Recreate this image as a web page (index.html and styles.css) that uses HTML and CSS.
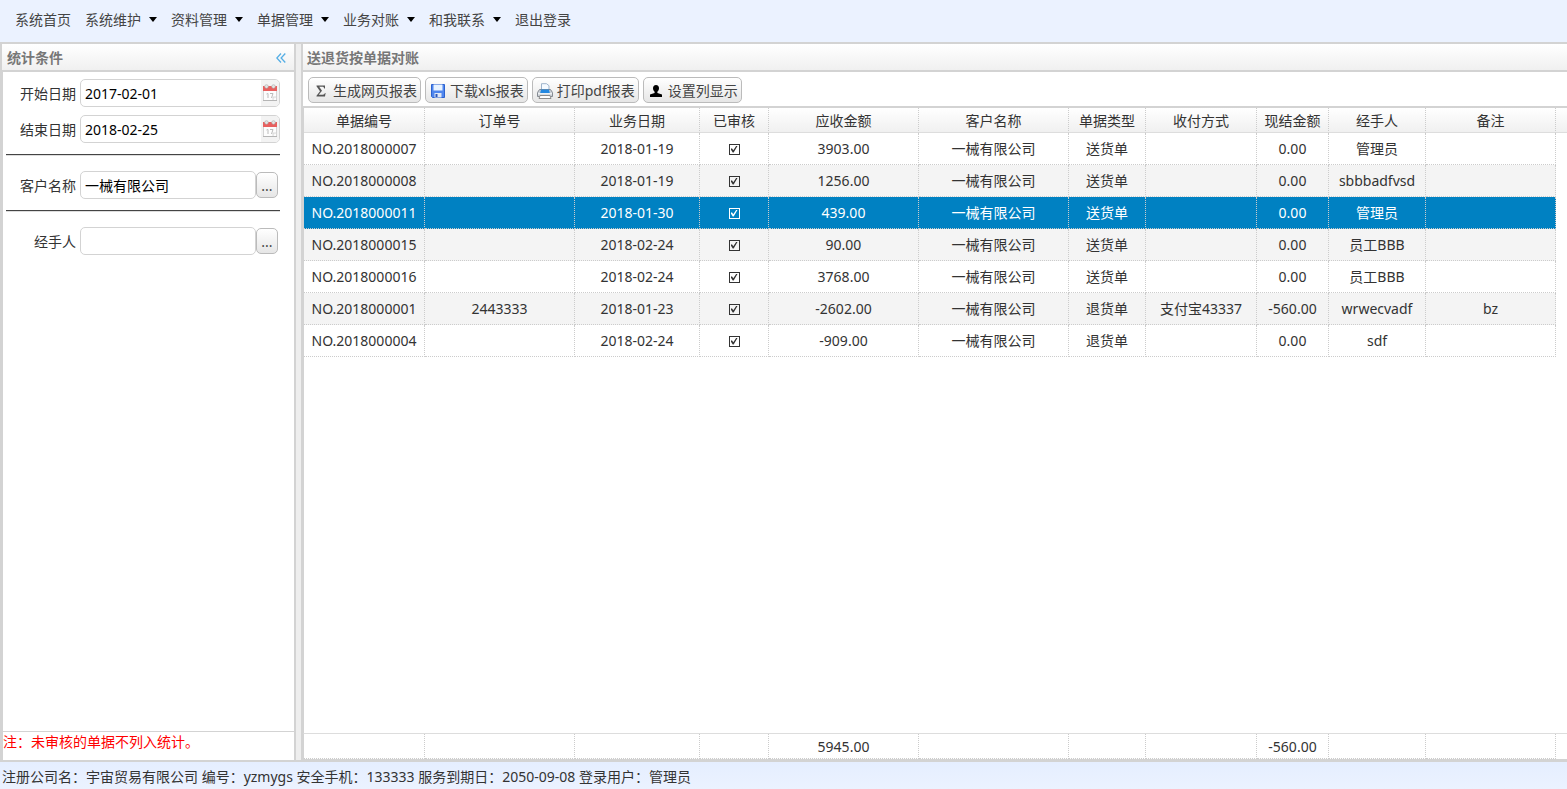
FILE: index.html
```html
<!DOCTYPE html>
<html lang="zh-CN">
<head>
<meta charset="utf-8">
<title>送退货按单据对账</title>
<link rel="stylesheet" href="styles.css">
</head>
<body>
<svg class="defs" aria-hidden="true">
  <symbol id="calendar" viewBox="0 0 16 18">
    <rect x="1.500" y="3.500" width="13" height="13" fill="#fdfdfd" stroke="#d4d4d4"/>
    <path d="M1 16.500h14" stroke="#b5b5b5"/>
    <path d="M1 2h14v5H1z" fill="#e8605f"/>
    <circle cx="4.500" cy="2.500" r="1.800" fill="#e6e6e6" stroke="#aaa" stroke-width=".6"/>
    <circle cx="11.500" cy="2.500" r="1.800" fill="#e6e6e6" stroke="#aaa" stroke-width=".6"/>
    <path d="M4.500 10l1-.5h.5V14M8 9.500h3L9.500 14" fill="none" stroke="#bbb"/>
    <path d="M11 16v-3h3.500" fill="#f5f5f5" stroke="#ccc" stroke-width=".7"/>
  </symbol>
</svg>
<nav class="menu">
  <a href="#">系统首页</a>
  <a href="#" class="drop">系统维护</a>
  <a href="#" class="drop">资料管理</a>
  <a href="#" class="drop">单据管理</a>
  <a href="#" class="drop">业务对账</a>
  <a href="#" class="drop">和我联系</a>
  <a href="#">退出登录</a>
</nav>
<div class="workspace">
  <aside class="side">
    <header class="bar">
      <h2>统计条件</h2>
      <button class="collapse" aria-label="收起"><svg width="10" height="10" viewBox="0 0 10 10"><path d="M5 .5L.8 5 5 9.500M9.300.5L5.100 5l4.200 4.500" fill="none" stroke="#55aee5" stroke-width="1.300"/></svg></button>
    </header>
    <form class="filters">
      <div class="field"><label for="start">开始日期</label><div class="box date"><input id="start" value="2017-02-01"><button type="button" aria-label="选择开始日期"><svg width="16" height="18"><use href="#calendar"/></svg></button></div></div>
      <div class="field"><label for="end">结束日期</label><div class="box date"><input id="end" value="2018-02-25"><button type="button" aria-label="选择结束日期"><svg width="16" height="18"><use href="#calendar"/></svg></button></div></div>
      <hr>
      <div class="field"><label for="client">客户名称</label><div class="box"><input id="client" value="一械有限公司"></div><button type="button" class="btn pick">...</button></div>
      <hr>
      <div class="field"><label for="handler">经手人</label><div class="box"><input id="handler" value=""></div><button type="button" class="btn pick">...</button></div>
    </form>
    <p class="note">注：未审核的单据不列入统计。</p>
  </aside>
  <div class="splitter"></div>
  <main class="main">
    <header class="bar"><h2>送退货按单据对账</h2></header>
    <div class="tools">
      <button class="btn"><svg width="16" height="16" viewBox="0 0 16 16"><path d="M3.500 2.500h8.500v3h-.8c-.2-1.300-.7-1.800-2-1.800H6.200L9 7.700 5.700 11.800h4c1.300 0 1.900-.6 2.200-1.700h.7l-.6 3.400H3.500v-.8L7 8.300 3.500 3.300z" fill="#555"/></svg>生成网页报表</button>
      <button class="btn"><svg width="16" height="16" viewBox="0 0 16 16"><path d="M1.500 1.500h13v13H2.500l-1-1z" fill="#4f86ee" stroke="#2c62cf"/><path d="M3.500 1.500h9v6h-9z" fill="#e8f3ff"/><path d="M4.500 10h7v4.500h-7z" fill="#dfe7f5"/><path d="M5.500 11h2v3h-2z" fill="#2a55b8"/></svg>下载xls报表</button>
      <button class="btn"><svg width="16" height="16" viewBox="0 0 16 16"><path d="M4.500 7V.7h5l2.500 2V7" fill="#f5faff" stroke="#9fb4cc"/><path d="M2.500 6.500h11l2 3v4h-15v-4z" fill="#c9cfd6" stroke="#858b92"/><path d="M4 6.500h8l.8 3.500H3.200z" fill="#2488e0"/><path d="M1 10.800h14" stroke="#fff"/><path d="M3 12.500h10l1 3H2z" fill="#fff" stroke="#8c8c8c"/></svg>打印pdf报表</button>
      <button class="btn"><svg width="16" height="16" viewBox="0 0 16 16"><path d="M8 2c2 0 3 1.300 3 3.200 0 1.500-.7 2.800-1.600 3.500v1.200l4.600 1.600V14H2v-2.500l4.600-1.600V8.700C5.700 8 5 6.700 5 5.200 5 3.300 6 2 8 2z" fill="#000"/></svg>设置列显示</button>
    </div>
    <div class="grid">
      <table>
        <colgroup><col class="c1"><col class="c2"><col class="c3"><col class="c4"><col class="c5"><col class="c6"><col class="c7"><col class="c8"><col class="c9"><col class="c10"><col class="c11"><col></colgroup>
        <thead><tr><th>单据编号</th><th>订单号</th><th>业务日期</th><th>已审核</th><th>应收金额</th><th>客户名称</th><th>单据类型</th><th>收付方式</th><th>现结金额</th><th>经手人</th><th>备注</th><th class="rest"></th></tr></thead>
        <tbody>
          <tr><td>NO.2018000007</td><td></td><td>2018-01-19</td><td><input type="checkbox" aria-label="已审核" checked></td><td>3903.00</td><td>一械有限公司</td><td>送货单</td><td></td><td>0.00</td><td>管理员</td><td></td><td class="rest"></td></tr>
          <tr><td>NO.2018000008</td><td></td><td>2018-01-19</td><td><input type="checkbox" aria-label="已审核" checked></td><td>1256.00</td><td>一械有限公司</td><td>送货单</td><td></td><td>0.00</td><td>sbbbadfvsd</td><td></td><td class="rest"></td></tr>
          <tr class="selected"><td>NO.2018000011</td><td></td><td>2018-01-30</td><td><input type="checkbox" aria-label="已审核" checked></td><td>439.00</td><td>一械有限公司</td><td>送货单</td><td></td><td>0.00</td><td>管理员</td><td></td><td class="rest"></td></tr>
          <tr><td>NO.2018000015</td><td></td><td>2018-02-24</td><td><input type="checkbox" aria-label="已审核" checked></td><td>90.00</td><td>一械有限公司</td><td>送货单</td><td></td><td>0.00</td><td>员工BBB</td><td></td><td class="rest"></td></tr>
          <tr><td>NO.2018000016</td><td></td><td>2018-02-24</td><td><input type="checkbox" aria-label="已审核" checked></td><td>3768.00</td><td>一械有限公司</td><td>送货单</td><td></td><td>0.00</td><td>员工BBB</td><td></td><td class="rest"></td></tr>
          <tr><td>NO.2018000001</td><td>2443333</td><td>2018-01-23</td><td><input type="checkbox" aria-label="已审核" checked></td><td>-2602.00</td><td>一械有限公司</td><td>退货单</td><td>支付宝43337</td><td>-560.00</td><td>wrwecvadf</td><td>bz</td><td class="rest"></td></tr>
          <tr><td>NO.2018000004</td><td></td><td>2018-02-24</td><td><input type="checkbox" aria-label="已审核" checked></td><td>-909.00</td><td>一械有限公司</td><td>退货单</td><td></td><td>0.00</td><td>sdf</td><td></td><td class="rest"></td></tr>
        </tbody>
      </table>
    </div>
    <div class="totals">
      <table>
        <colgroup><col class="c1"><col class="c2"><col class="c3"><col class="c4"><col class="c5"><col class="c6"><col class="c7"><col class="c8"><col class="c9"><col class="c10"><col class="c11"><col></colgroup>
        <tbody><tr><td></td><td></td><td></td><td></td><td>5945.00</td><td></td><td></td><td></td><td>-560.00</td><td></td><td></td><td class="rest"></td></tr></tbody>
      </table>
    </div>
  </main>
</div>
<footer class="status">注册公司名：宇宙贸易有限公司 编号：yzmygs 安全手机：133333 服务到期日：2050-09-08 登录用户：管理员</footer>
</body>
</html>
```
FILE: styles.css
```css
* { box-sizing: border-box; }
body {
  margin: 0;
  height: 100vh;
  display: flex;
  flex-direction: column;
  overflow: hidden;
  background: #ebf2ff;
  color: #333;
  font: 14px/20px "Noto Sans", "Noto Sans CJK SC", sans-serif;
}
button, input { font: inherit; color: inherit; margin: 0; }
.defs { position: absolute; width: 0; height: 0; }

.menu { display: flex; gap: 14px; padding: 10px 15px 12px; }
.menu a { color: #444; text-decoration: none; white-space: nowrap; }
.menu .drop::after {
  content: "";
  display: inline-block;
  margin-left: 8px;
  vertical-align: 3px;
  border: 4px solid transparent;
  border-top: 5px solid #000;
  border-bottom: 0;
}

.workspace { flex: 1; min-height: 0; display: flex; border: solid #d3d3d3; border-width: 2px 0 2px 2px; }
.bar {
  display: flex;
  align-items: center;
  justify-content: space-between;
  height: 28px;
  padding: 1px 8px 0 5px;
  background: linear-gradient(#fff, #f0f0f0);
  border-bottom: 2px solid #d3d3d3;
}
.bar h2 { margin: 0; color: #777; font-size: 14px; line-height: 20px; }
.collapse { display: flex; padding: 0; border: 0; background: none; }

.side { width: 294px; display: flex; flex-direction: column; background: #fff; border-right: 2px solid #d3d3d3; }
.filters { flex: 1; display: flex; flex-direction: column; gap: 8px; padding: 7px 14px 0 3px; border-left: 1px solid #d3d3d3; }
.field { display: flex; align-items: center; height: 28px; }
.field label { width: 70px; margin-right: 4px; padding-top: 2px; text-align: right; }
.box { display: flex; flex: 1; height: 28px; overflow: hidden; border: 1px solid #d3d3d3; border-radius: 5px; background: #fff; }
.box input { flex: 1; min-width: 0; padding: 2px 4px 0; border: 0; outline: 0; background: none; color: #000; }
.date button { display: flex; align-items: center; width: 18px; padding: 0 1px; border: 0; background: #f3f3f3; }
.filters hr { width: 100%; height: 2px; margin: 3px 0 7px; border: 0; border-top: 1px solid #444; border-bottom: 1px solid #ddd; }
.btn {
  display: flex;
  align-items: center;
  gap: 4px;
  height: 26px;
  padding: 1px 3px 0 4px;
  border: 1px solid #bbb;
  border-radius: 5px;
  background: linear-gradient(#fff, #e6e6e6);
  color: #444;
  white-space: nowrap;
}
.btn svg { flex: none; }
.pick { width: 22px; justify-content: center; padding: 2px 0 0; margin-right: 2px; }
.note { margin: 0; height: 29px; border-top: 1px solid #d3d3d3; border-left: 1px solid #d3d3d3; color: #f00; line-height: 20px; }

.splitter { width: 5px; background: #eee; }
.main { flex: 1; min-width: 0; display: flex; flex-direction: column; background: #fff; border-left: 2px solid #d3d3d3; border-bottom: 1px solid #d3d3d3; }
.main .bar { padding-left: 4px; }
.tools { display: flex; gap: 4px; padding: 5px 5px 3px; border-bottom: 2px solid #d3d3d3; }
.grid { flex: 1; min-height: 0; }
.grid, .totals { border-left: 1px solid #d3d3d3; }
.totals { border-top: 1px solid #ddd; }

table { width: 100%; table-layout: fixed; border-spacing: 0; }
th, td { padding: 0; font-weight: 400; text-align: center; white-space: nowrap; border-right: 1px dotted #ccc; }
th { height: 25px; padding-top: 2px; background: linear-gradient(#fff, #f0f0f0); border-bottom: 1px solid #ddd; }
td { height: 32px; border-bottom: 1px dotted #ccc; }
.rest { border-right: 0; }
td.rest { background: #fff; border-bottom: 0; }
.grid tbody tr:nth-child(even) td:not(.rest) { background: #f4f4f4; }
.grid .selected td:not(.rest) { background: #0081c2; color: #fff; }
.totals td { height: 25px; padding-top: 2px; }
.c1 { width: 121px; } .c2 { width: 150px; } .c3 { width: 125px; } .c4 { width: 69px; }
.c5 { width: 150px; } .c6 { width: 150px; } .c7 { width: 77px; } .c8 { width: 111px; }
.c9 { width: 72px; } .c10 { width: 97px; } .c11 { width: 130px; }

td input {
  appearance: none;
  display: block;
  width: 11px;
  height: 11px;
  margin: 1px auto 0;
  border: 1px solid currentColor;
}
td input:checked::before {
  content: "";
  display: block;
  height: 7px;
  margin: 1px;
  background: currentColor;
  clip-path: polygon(0 50%, 20% 38%, 40% 68%, 85% 0, 100% 8%, 45% 100%, 32% 100%);
}

.status { height: 27px; padding-left: 2px; line-height: 30px; white-space: nowrap; background: linear-gradient(#e5eeff, #ebf2ff); }
```
